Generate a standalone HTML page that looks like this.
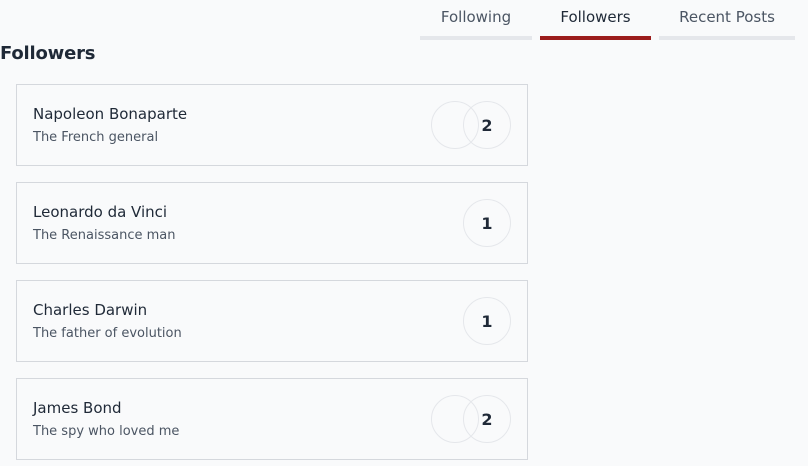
<!DOCTYPE html>
<html><head><style>
body{margin:0;width:808px;height:466px;background:#f9fafb;font-family:"DejaVu Sans","Liberation Sans",sans-serif;color:#1f2937;position:relative;overflow:hidden}
.tab{position:absolute;top:0;height:40px;text-align:center;font-size:15px;color:#4b5563;line-height:35px}
.tab::after{content:"";position:absolute;left:0;right:0;bottom:0;height:4px;background:#e5e7eb}
.tab.a{color:#1f2937}.tab.a::after{background:#9b1c1c}
h1{position:absolute;left:0;top:43px;margin:0;font-size:18px;font-weight:bold;color:#1f2937;letter-spacing:-0.2px}
.card{position:absolute;left:16px;width:510px;height:80px;border:1px solid #d5d8dd;background:#f9fafb}
.n{position:absolute;left:16px;top:20px;font-size:15px;color:#1f2937}
.s{position:absolute;left:16px;top:45px;font-size:13px;color:#4b5563}
.c{position:absolute;top:16px;width:46px;height:46px;border:1px solid #e5e7eb;border-radius:50%;box-sizing:content-box;text-align:center;line-height:47px;font-weight:600;font-size:16px}
</style></head><body>
<div class="tab" style="left:420px;width:112px">Following</div>
<div class="tab a" style="left:540px;width:111px">Followers</div>
<div class="tab" style="left:659px;width:136px">Recent Posts</div>
<h1>Followers</h1>
<div class="card" style="top:84px"><div class="n">Napoleon Bonaparte</div><div class="s">The French general</div><div class="c" style="left:414px"></div><div class="c" style="left:446px">2</div></div>
<div class="card" style="top:182px"><div class="n">Leonardo da Vinci</div><div class="s">The Renaissance man</div><div class="c" style="left:446px">1</div></div>
<div class="card" style="top:280px"><div class="n">Charles Darwin</div><div class="s">The father of evolution</div><div class="c" style="left:446px">1</div></div>
<div class="card" style="top:378px"><div class="n">James Bond</div><div class="s">The spy who loved me</div><div class="c" style="left:414px"></div><div class="c" style="left:446px">2</div></div>
</body></html>
